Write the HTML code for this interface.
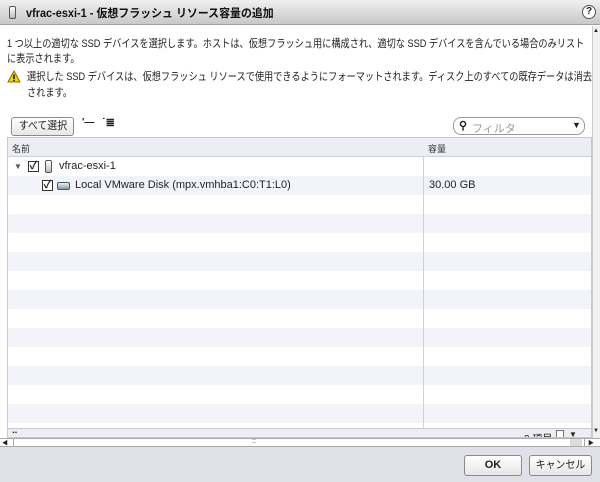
<!DOCTYPE html>
<html><head><meta charset="utf-8">
<style>
*{margin:0;padding:0;box-sizing:border-box}
body{width:600px;height:482px;overflow:hidden;background:#fff;font-family:"Liberation Sans","Noto Sans CJK JP",sans-serif;font-size:11px;color:#222;position:relative}
.a{position:absolute}
.title{left:0;top:0;width:600px;height:25px;background:linear-gradient(#f0f0f0,#c8c8c8);border-bottom:1px solid #a0a0a0}
.title .t{left:26px;top:5px;font-weight:bold;font-size:11.5px;color:#111;white-space:nowrap;transform:scaleX(0.95);transform-origin:left}
.hosticon{width:7px;height:13px;border:1px solid #555;border-radius:2px;background:linear-gradient(#fff,#bbb)}
.p{left:7px;font-size:11px;line-height:15px;white-space:nowrap;transform:scaleX(0.835);transform-origin:left}
.btn{border:1px solid #8a8a8a;border-radius:3px;background:linear-gradient(#fff,#e6e6e6);text-align:center;font-size:11px}
.cb{width:11px;height:11px;border:1px solid #333;background:#fff;font-size:11px;line-height:9px;text-align:center;font-weight:bold}
</style></head><body>
<div class="a title">
  <div class="a hosticon" style="left:9px;top:6px"></div>
  <div class="a t">vfrac-esxi-1 - 仮想フラッシュ リソース容量の追加</div>
  <div class="a" style="left:582px;top:5px;width:14px;height:14px;border:1px solid #555;border-radius:50%;background:#fff;font-size:10px;line-height:12px;text-align:center;font-weight:bold">?</div>
</div>
<div class="a p" style="top:37px">1 つ以上の適切な SSD デバイスを選択します。ホストは、仮想フラッシュ用に構成され、適切な SSD デバイスを含んでいる場合のみリスト</div>
<div class="a p" style="top:52px">に表示されます。</div>
<svg class="a" style="left:7px;top:70px" width="14" height="13"><polygon points="7,1 13,12 1,12" fill="#f2d200" stroke="#8a6d00"/><rect x="6.3" y="4.5" width="1.4" height="4.5" fill="#000"/><rect x="6.3" y="9.8" width="1.4" height="1.4" fill="#000"/></svg>
<div class="a p" style="left:27px;top:70px">選択した SSD デバイスは、仮想フラッシュ リソースで使用できるようにフォーマットされます。ディスク上のすべての既存データは消去</div>
<div class="a p" style="left:27px;top:86px">されます。</div>

<div class="a btn" style="left:11px;top:117px;width:63px;height:19px;line-height:17px"><span style="display:inline-block;transform:scaleX(0.9)">すべて選択</span></div>
<div class="a" style="left:82px;top:117px;font-size:10px;font-weight:bold">'—</div>
<div class="a" style="left:102px;top:116px;font-size:11px;font-weight:bold">˙≣</div>
<div class="a" style="left:453px;top:117px;width:132px;height:18px;border:1px solid #999;border-radius:8px;background:#fff">
  <div class="a" style="left:5px;top:1px;font-size:11px;font-weight:bold">⚲</div>
  <div class="a" style="left:18px;top:2px;color:#999">フィルタ</div>
  <div class="a" style="left:118px;top:2px;font-size:9px">▼</div>
</div>

<div class="a" style="left:7px;top:137px;width:585px;height:301px;border:1px solid #c8c8d0;background:#fff;overflow:hidden">
  <div class="a" style="left:0;top:0;width:585px;height:19px;background:#eceef4;border-bottom:1px solid #cfd2dc"></div>
  <div class="a" style="left:4px;top:4px;font-size:9px;color:#333">名前</div>
  <div class="a" style="left:420px;top:4px;font-size:9px;color:#333">容量</div>
  <div class="a" style="left:0;top:38px;width:585px;height:19px;background:#f2f4fa"></div>
  <div class="a" style="left:0;top:76px;width:585px;height:19px;background:#f2f4fa"></div>
  <div class="a" style="left:0;top:114px;width:585px;height:19px;background:#f2f4fa"></div>
  <div class="a" style="left:0;top:152px;width:585px;height:19px;background:#f2f4fa"></div>
  <div class="a" style="left:0;top:190px;width:585px;height:19px;background:#f2f4fa"></div>
  <div class="a" style="left:0;top:228px;width:585px;height:19px;background:#f2f4fa"></div>
  <div class="a" style="left:0;top:266px;width:585px;height:19px;background:#f2f4fa"></div>
  <div class="a" style="left:415px;top:19px;width:1px;height:271px;background:#d0d0d8"></div>
  <div class="a" style="left:0;top:290px;width:585px;height:12px;background:#eceef4;border-top:1px solid #c8c8d0"></div>
  <div class="a" style="left:4px;top:290px;font-size:10px;font-weight:bold">ᐧᐧ</div>
  <div class="a" style="left:516px;top:292px;font-size:10px">2 項目</div>
  <div class="a" style="left:548px;top:292px;width:8px;height:10px;border:1px solid #777;background:#fff"></div>
  <div class="a" style="left:561px;top:292px;font-size:8px">▼</div>
</div>
<div class="a" style="left:14px;top:162px;font-size:8px;color:#555">▼</div>
<div class="a cb" style="left:28px;top:161px">✓</div>
<div class="a hosticon" style="left:45px;top:160px"></div>
<div class="a" style="left:59px;top:160px">vfrac-esxi-1</div>
<div class="a cb" style="left:42px;top:180px">✓</div>
<div class="a" style="left:57px;top:182px;width:13px;height:8px;border:1px solid #555;border-radius:2px;background:linear-gradient(#e8eef4,#8a9aa8)"></div>
<div class="a" style="left:75px;top:179px">Local VMware Disk (mpx.vmhba1:C0:T1:L0)</div>
<div class="a" style="left:429px;top:179px">30.00 GB</div>

<div class="a" style="left:592px;top:26px;width:8px;height:412px;background:#f0f0f0;border-left:1px solid #ccc"></div>
<div class="a" style="left:593px;top:28px;font-size:6px">▲</div>
<div class="a" style="left:593px;top:428px;font-size:6px">▼</div>
<div class="a" style="left:0;top:438px;width:600px;height:9px;background:#fff;border-top:1px solid #aaa;border-bottom:1px solid #aaa"></div>
<div class="a" style="left:2px;top:438px;font-size:6px">◀</div>
<div class="a" style="left:13px;top:438px;width:1px;height:9px;background:#aaa"></div>
<div class="a" style="left:570px;top:439px;width:12px;height:7px;background:#ddd"></div>
<div class="a" style="left:584px;top:438px;width:1px;height:9px;background:#aaa"></div>
<div class="a" style="left:588px;top:438px;font-size:6px">▶</div>
<div class="a" style="left:252px;top:438px;font-size:7px">::</div>
<div class="a" style="left:0;top:447px;width:600px;height:35px;background:#dfe0e8"></div>
<div class="a btn" style="left:464px;top:455px;width:58px;height:21px;line-height:19px;font-weight:bold">OK</div>
<div class="a btn" style="left:529px;top:455px;width:63px;height:21px;line-height:19px"><span style="display:inline-block;transform:scaleX(0.9)">キャンセル</span></div>
</body></html>
